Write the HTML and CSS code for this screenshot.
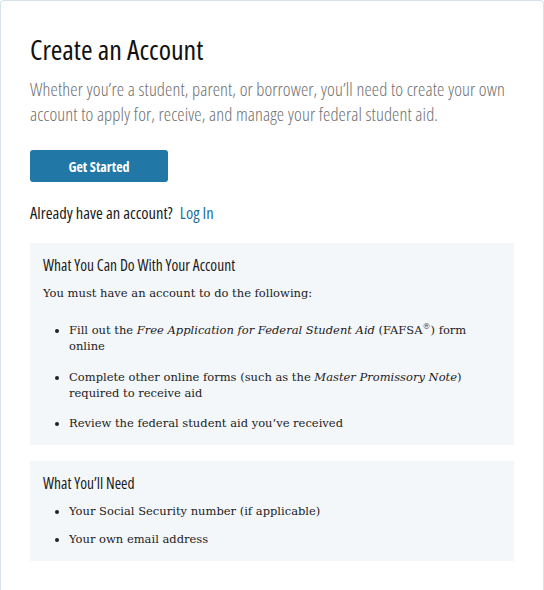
FILE: index.html
```html
<!DOCTYPE html>
<html lang="en">
<head>
  <meta charset="UTF-8" />
  <meta name="viewport" content="width=device-width, initial-scale=1.0" />
  <title>Create an Account</title>
  <link rel="stylesheet" href="styles.css">
</head>
<body>
  <div class="card">
    <h1>Create an Account</h1>
    <p class="intro">Whether you’re a student, parent, or borrower, you’ll need to create your own account to apply for, receive, and manage your federal student aid.</p>
    <button class="start-btn">Get Started</button>
    <p class="login">Already have an account? <a href="#">Log In</a></p>

    <div class="panel">
      <h2>What You Can Do With Your Account</h2>
      <p>You must have an account to do the following:</p>
      <ul class="spaced">
        <li>Fill out the <em>Free Application for Federal Student Aid</em> (FAFSA<sup>®</sup>) form online</li>
        <li>Complete other online forms (such as the <em>Master Promissory Note</em>) required to receive aid</li>
        <li>Review the federal student aid you’ve received</li>
      </ul>
    </div>

    <div class="panel">
      <h2>What You’ll Need</h2>
      <ul>
        <li>Your Social Security number (if applicable)</li>
        <li>Your own email address</li>
      </ul>
    </div>
  </div>
</body>
</html>
```

FILE: styles.css
```css
body {
  margin: 0;
  padding: 0;
  background: #fff;
  font-family: "Open Sans", "DejaVu Sans Condensed", sans-serif;
  font-stretch: 75%;
  color: #1b1b1b;
}
.card {
  box-sizing: border-box;
  height: 590px;
  border: 1px solid #d6e3ea;
  border-bottom: none;
  border-radius: 4px 4px 0 0;
  padding: 31px 29px 0 29px;
}
h1 {
  font-size: 28px;
  font-weight: normal;
  margin: 0 0 10px;
  line-height: 34px;
  color: #111;
}
.intro {
  font-size: 18.5px;
  font-weight: 300;
  letter-spacing: 0.1px;
  line-height: 25px;
  color: #6f6f6f;
  margin: 0 0 24px;
}
.start-btn {
  display: block;
  width: 138px;
  height: 32px;
  border: none;
  border-radius: 3px;
  background: #2178a6;
  color: #fff;
  font-family: inherit;
  font-stretch: 75%;
  font-size: 14px;
  font-weight: bold;
  cursor: pointer;
}
.login {
  font-size: 16.5px;
  margin: 21px 0 20px;
  line-height: 20px;
}
.login a {
  color: #1f6fa3;
  text-decoration: none;
  margin-left: 4px;
}
.panel {
  background: #f4f7fa;
  padding: 12px 13px 2px;
  margin-bottom: 16px;
}
h2 {
  font-size: 15.5px;
  font-weight: 500;
  margin: 0 0 10px;
  line-height: 20px;
}
.panel p,
.panel li {
  font-family: "DejaVu Serif", serif;
  font-stretch: normal;
  font-size: 11.5px;
  line-height: 16px;
  color: #222;
}
.panel p {
  margin: 0 0 21px;
}
.panel ul {
  margin: 0 0 12px;
  padding-left: 26px;
}
.panel li {
  margin-bottom: 12px;
}
.panel ul.spaced li {
  margin-bottom: 14.5px;
}
.panel li:last-child,
.panel ul.spaced li:last-child {
  margin-bottom: 0;
}
sup {
  font-size: 8px;
  line-height: 0;
}
```
